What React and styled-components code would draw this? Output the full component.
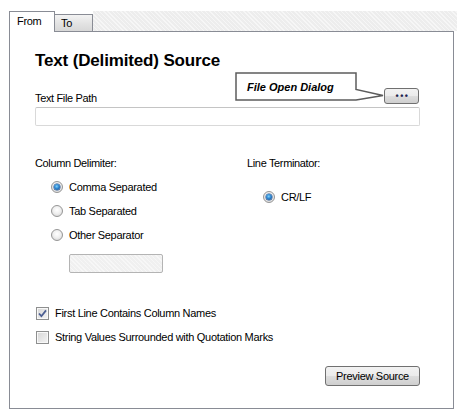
import styled, { createGlobalStyle } from "styled-components"

const GlobalStyle = createGlobalStyle`
    body {
        margin: 0;
        background: #ffffff;
        font-family: "Liberation Sans", Arial, sans-serif;
        color: #000000;
    }
`

function Radio({ checked, children }) {
    return (
        <SCOption>
            <SCRadio $checked={checked} />
            <span>{children}</span>
        </SCOption>
    )
}

function Check({ checked, children }) {
    return (
        <SCOption>
            <SCCheckBox>
                {checked && (
                    <svg width="11" height="11" viewBox="0 0 11 11">
                        <path d="M2 5.5 L4.4 8.2 L9 2.4" fill="none" stroke="#4b5e92" strokeWidth="1.8" />
                    </svg>
                )}
            </SCCheckBox>
            <span>{children}</span>
        </SCOption>
    )
}

export default function App() {
    return (
        <>
            <GlobalStyle />
            <SCPage>
                <SCTabStrip>
                    <SCTab $active>From</SCTab>
                    <SCTab>To</SCTab>
                    <SCFiller />
                </SCTabStrip>
                <SCPanel>
                    <SCTitle>Text (Delimited) Source</SCTitle>
                    <SCPathRow>
                        <SCLabel>Text File Path</SCLabel>
                        <SCCallout>
                            <svg width="150" height="31" viewBox="0 0 150 31">
                                <path d="M1 1 H121 V17.5 L148 23.5 L121 28 H1 Z" fill="#ffffff" stroke="#5c5c5c" strokeWidth="1.5" />
                            </svg>
                            <span>File Open Dialog</span>
                        </SCCallout>
                        <SCDotsButton>•••</SCDotsButton>
                    </SCPathRow>
                    <SCTextInput />
                    <SCColumns>
                        <div>
                            <SCLabel>Column Delimiter:</SCLabel>
                            <SCOptionList $top={9}>
                                <Radio checked>Comma Separated</Radio>
                                <Radio>Tab Separated</Radio>
                                <Radio>Other Separator</Radio>
                            </SCOptionList>
                            <SCOtherInput />
                        </div>
                        <div>
                            <SCLabel>Line Terminator:</SCLabel>
                            <SCOptionList $top={19}>
                                <Radio checked>CR/LF</Radio>
                            </SCOptionList>
                        </div>
                    </SCColumns>
                    <SCCheckList>
                        <Check checked>First Line Contains Column Names</Check>
                        <Check>String Values Surrounded with Quotation Marks</Check>
                    </SCCheckList>
                    <SCFooter>
                        <SCButton>Preview Source</SCButton>
                    </SCFooter>
                </SCPanel>
            </SCPage>
        </>
    )
}

const SCPage = styled.div`
    padding: 11px 0 0 9px;
`

const SCTabStrip = styled.div`
    width: 448px;
    height: 20px;
    display: flex;
    align-items: flex-end;
`

const SCTab = styled.div`
    position: relative;
    z-index: 2;
    box-sizing: border-box;
    height: ${p => p.$active ? "21px" : "17px"};
    width: ${p => p.$active ? "46px" : "38px"};
    margin-bottom: ${p => p.$active ? "-1px" : "0"};
    padding: ${p => p.$active ? "3px 0 0 7px" : "2px 0 0 6px"};
    border: 1px solid #898c95;
    border-bottom: none;
    border-left: ${p => p.$active ? "1px solid #898c95" : "none"};
    background: ${p => p.$active ? "#ffffff" : "linear-gradient(#f3f3f3, #e4e4e4 50%, #d8d8d8)"};
    font-size: 11px;
    letter-spacing: -0.3px;
    line-height: 13px;
`

const SCFiller = styled.div`
    flex: 1;
    height: 20px;
    background-color: #ededed;
    background-image: repeating-linear-gradient(45deg, rgba(255,255,255,0.5) 0 1px, transparent 1px 3px);
`

const SCPanel = styled.div`
    position: relative;
    z-index: 1;
    box-sizing: border-box;
    width: 445px;
    height: 378px;
    border: 1px solid #898c95;
    background: #ffffff;
    padding: 19px 33px 0 25px;
`

const SCTitle = styled.div`
    font-size: 17px;
    font-weight: 700;
    line-height: 20px;
    letter-spacing: -0.15px;
`

const SCLabel = styled.div`
    font-size: 11px;
    line-height: 13px;
    letter-spacing: -0.35px;
`

const SCPathRow = styled.div`
    position: relative;
    margin-top: 17px;
    display: flex;
    justify-content: space-between;
    align-items: flex-end;
`

const SCCallout = styled.div`
    position: absolute;
    left: 200px;
    top: -16px;
    width: 150px;
    height: 31px;
    svg {
        position: absolute;
        left: 0;
        top: 0;
    }
    span {
        position: absolute;
        left: 12px;
        top: 0;
        height: 29px;
        display: flex;
        align-items: center;
        font-size: 11px;
        font-weight: 700;
        font-style: italic;
        letter-spacing: 0px;
    }
`

const SCDotsButton = styled.button`
    box-sizing: border-box;
    width: 35px;
    height: 16px;
    margin: 0 1px 1px 0;
    padding: 0 0 1px 2px;
    border: 1px solid #707070;
    border-radius: 3px;
    background: linear-gradient(#f2f2f2 0%, #ebebeb 50%, #dddddd 51%, #cfcfcf 100%);
    font-family: "Liberation Sans", Arial, sans-serif;
    font-size: 9px;
    font-weight: 700;
    letter-spacing: 1.5px;
    line-height: 10px;
    color: #1d2450;
`

const SCTextInput = styled.div`
    box-sizing: border-box;
    margin-top: 2px;
    width: 385px;
    height: 19px;
    border: 1px solid #d9d9d9;
    border-top-color: #c4c4c4;
    border-radius: 2px;
    background: #ffffff;
`

const SCColumns = styled.div`
    margin-top: 31px;
    display: grid;
    grid-template-columns: 212px 1fr;
`

const SCOptionList = styled.div`
    margin-top: ${p => p.$top}px;
    padding-left: 16px;
    display: flex;
    flex-direction: column;
    gap: 8px;
`

const SCOption = styled.div`
    height: 16px;
    display: flex;
    align-items: center;
    gap: 6px;
    font-size: 11px;
    letter-spacing: -0.3px;
`

const SCRadio = styled.span`
    box-sizing: border-box;
    width: 12px;
    height: 12px;
    border-radius: 50%;
    border: 1px solid #969696;
    background: radial-gradient(circle at 50% 40%, #ffffff 0%, #f0f0f0 45%, #d0d0d0 100%);
    display: flex;
    align-items: center;
    justify-content: center;
    &::after {
        content: "";
        display: ${p => p.$checked ? "block" : "none"};
        width: 6px;
        height: 6px;
        border-radius: 50%;
        background: radial-gradient(circle at 45% 40%, #7fd2fb 0%, #2c84cf 45%, #123f7d 100%);
        box-shadow: 0 0 0 0.5px #1c4785;
    }
`

const SCOtherInput = styled.div`
    box-sizing: border-box;
    margin: 11px 0 0 34px;
    width: 94px;
    height: 19px;
    border: 1px solid #b4b4b4;
    border-radius: 2px;
    background-color: #f0f0f0;
    background-image: repeating-linear-gradient(45deg, rgba(255,255,255,0.45) 0 1px, transparent 1px 3px);
`

const SCCheckList = styled.div`
    margin-top: 32px;
    padding-left: 1px;
    display: flex;
    flex-direction: column;
    gap: 8px;
`

const SCCheckBox = styled.span`
    box-sizing: border-box;
    width: 13px;
    height: 13px;
    border: 1px solid #8e8f8f;
    background: linear-gradient(135deg, #d6d6d6, #f4f4f4);
    box-shadow: inset 0 0 0 1px #f8f8f8;
    display: flex;
    align-items: center;
    justify-content: center;
`

const SCFooter = styled.div`
    margin-top: 21px;
    display: flex;
    justify-content: flex-end;
`

const SCButton = styled.button`
    box-sizing: border-box;
    width: 95px;
    height: 20px;
    padding: 0;
    border: 1px solid #707070;
    border-radius: 3px;
    background: linear-gradient(#f2f2f2 0%, #ebebeb 50%, #dddddd 51%, #cfcfcf 100%);
    font-family: "Liberation Sans", Arial, sans-serif;
    font-size: 11px;
    letter-spacing: -0.3px;
    color: #000000;
`
